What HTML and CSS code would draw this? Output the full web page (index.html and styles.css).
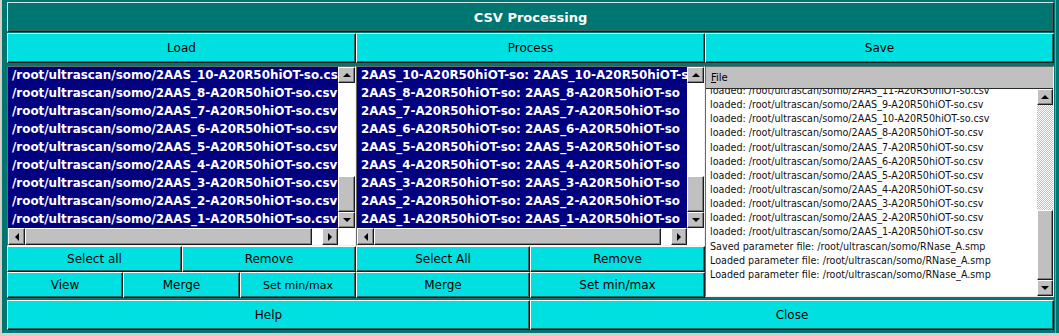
FILE: index.html
```html
<!DOCTYPE html>
<html>
<head>
<meta charset="utf-8">
<link rel="stylesheet" href="styles.css">
</head>
<body>
<div class="window">
  <div class="title">CSV Processing</div>
  <div class="toprow">
    <div class="btn">Load</div>
    <div class="btn">Process</div>
    <div class="btn">Save</div>
  </div>
  <div class="main">
    <div class="col">
      <div class="list">
        <div class="items">
          <div class="item">/root/ultrascan/somo/2AAS_10-A20R50hiOT-so.csv</div>
          <div class="item">/root/ultrascan/somo/2AAS_8-A20R50hiOT-so.csv</div>
          <div class="item">/root/ultrascan/somo/2AAS_7-A20R50hiOT-so.csv</div>
          <div class="item">/root/ultrascan/somo/2AAS_6-A20R50hiOT-so.csv</div>
          <div class="item">/root/ultrascan/somo/2AAS_5-A20R50hiOT-so.csv</div>
          <div class="item">/root/ultrascan/somo/2AAS_4-A20R50hiOT-so.csv</div>
          <div class="item">/root/ultrascan/somo/2AAS_3-A20R50hiOT-so.csv</div>
          <div class="item">/root/ultrascan/somo/2AAS_2-A20R50hiOT-so.csv</div>
          <div class="item">/root/ultrascan/somo/2AAS_1-A20R50hiOT-so.csv</div>
        </div>
        <div class="vscroll">
          <div class="sbtn"><span class="arr up"></span></div>
          <div class="track"></div>
          <div class="slider vs"></div>
          <div class="sbtn"><span class="arr down"></span></div>
        </div>
        <div class="hscroll">
          <div class="sbtn"><span class="arr left"></span></div>
          <div class="slider hs"></div>
          <div class="track"></div>
          <div class="sbtn"><span class="arr right"></span></div>
        </div>
        <div class="corner"></div>
      </div>
      <div class="r1 left">
        <div class="btn">Select all</div>
        <div class="btn">Remove</div>
      </div>
      <div class="r2 left">
        <div class="btn">View</div>
        <div class="btn">Merge</div>
        <div class="btn small">Set min/max</div>
      </div>
    </div>
    <div class="col">
      <div class="list">
        <div class="items">
          <div class="item">2AAS_10-A20R50hiOT-so: 2AAS_10-A20R50hiOT-so</div>
          <div class="item">2AAS_8-A20R50hiOT-so: 2AAS_8-A20R50hiOT-so</div>
          <div class="item">2AAS_7-A20R50hiOT-so: 2AAS_7-A20R50hiOT-so</div>
          <div class="item">2AAS_6-A20R50hiOT-so: 2AAS_6-A20R50hiOT-so</div>
          <div class="item">2AAS_5-A20R50hiOT-so: 2AAS_5-A20R50hiOT-so</div>
          <div class="item">2AAS_4-A20R50hiOT-so: 2AAS_4-A20R50hiOT-so</div>
          <div class="item">2AAS_3-A20R50hiOT-so: 2AAS_3-A20R50hiOT-so</div>
          <div class="item">2AAS_2-A20R50hiOT-so: 2AAS_2-A20R50hiOT-so</div>
          <div class="item">2AAS_1-A20R50hiOT-so: 2AAS_1-A20R50hiOT-so</div>
        </div>
        <div class="vscroll">
          <div class="sbtn"><span class="arr up"></span></div>
          <div class="track"></div>
          <div class="slider vs"></div>
          <div class="sbtn"><span class="arr down"></span></div>
        </div>
        <div class="hscroll">
          <div class="sbtn"><span class="arr left"></span></div>
          <div class="slider hs"></div>
          <div class="track"></div>
          <div class="sbtn"><span class="arr right"></span></div>
        </div>
        <div class="corner"></div>
      </div>
      <div class="r1 mid">
        <div class="btn">Select All</div>
        <div class="btn">Remove</div>
      </div>
      <div class="r2 mid">
        <div class="btn">Merge</div>
        <div class="btn">Set min/max</div>
      </div>
    </div>
    <div class="col">
      <div class="log">
        <div class="menubar"><span class="menu"><u>F</u>ile</span></div>
        <div class="logbody">
          <div class="logtext">
            <div class="lines">
              <div>loaded: /root/ultrascan/somo/2AAS_11-A20R50hiOT-so.csv</div>
              <div>loaded: /root/ultrascan/somo/2AAS_9-A20R50hiOT-so.csv</div>
              <div>loaded: /root/ultrascan/somo/2AAS_10-A20R50hiOT-so.csv</div>
              <div>loaded: /root/ultrascan/somo/2AAS_8-A20R50hiOT-so.csv</div>
              <div>loaded: /root/ultrascan/somo/2AAS_7-A20R50hiOT-so.csv</div>
              <div>loaded: /root/ultrascan/somo/2AAS_6-A20R50hiOT-so.csv</div>
              <div>loaded: /root/ultrascan/somo/2AAS_5-A20R50hiOT-so.csv</div>
              <div>loaded: /root/ultrascan/somo/2AAS_4-A20R50hiOT-so.csv</div>
              <div>loaded: /root/ultrascan/somo/2AAS_3-A20R50hiOT-so.csv</div>
              <div>loaded: /root/ultrascan/somo/2AAS_2-A20R50hiOT-so.csv</div>
              <div>loaded: /root/ultrascan/somo/2AAS_1-A20R50hiOT-so.csv</div>
              <div>Saved parameter file: /root/ultrascan/somo/RNase_A.smp</div>
              <div>Loaded parameter file: /root/ultrascan/somo/RNase_A.smp</div>
              <div>Loaded parameter file: /root/ultrascan/somo/RNase_A.smp</div>
            </div>
          </div>
          <div class="vscroll logscroll">
            <div class="sbtn"><span class="arr up"></span></div>
            <div class="track dither"></div>
            <div class="slider ls"></div>
            <div class="sbtn"><span class="arr down"></span></div>
          </div>
        </div>
      </div>
    </div>
  </div>
  <div class="bottom">
    <div class="btn">Help</div>
    <div class="btn">Close</div>
  </div>
</div>
</body>
</html>
```

FILE: styles.css
```css
* { box-sizing: border-box; }

html, body {
  margin: 0;
  padding: 0;
}

body {
  width: 1059px;
  height: 336px;
  overflow: hidden;
  background: #d4d0c8;
  font-family: "DejaVu Sans", "Liberation Sans", sans-serif;
}

.window {
  margin-left: 2px;
  width: 1057px;
  height: 333px;
  padding: 2px 0 0 5px;
  background:
    linear-gradient(to right, transparent 1053px, #7f9896 1053px, #7f9896 1054px, transparent 1054px),
    #007672;
}

.title {
  width: 1047px;
  height: 30px;
  display: flex;
  align-items: center;
  justify-content: center;
  color: #ffffff;
  font-weight: bold;
  font-size: 13px;
  background: #007672;
  border: 1px solid;
  border-color: #d8e4e2 #202020 #202020 #d8e4e2;
  box-shadow: inset -1px -1px 0 #4c5a58;
}

.btn {
  display: flex;
  align-items: center;
  justify-content: center;
  background: #00e0e0;
  color: #000;
  font-size: 12px;
  border: 1px solid;
  border-color: #ffffff #1c1c1c #1c1c1c #ffffff;
  box-shadow: inset -1px -1px 0 #3a6464;
  white-space: nowrap;
}

.btn.small { font-size: 11px; }

.toprow {
  display: grid;
  grid-template-columns: 349px 349px 349px;
  height: 30px;
  margin-top: 1px;
}

.main {
  display: grid;
  grid-template-columns: 349px 349px 349px;
  margin-top: 3px;
  height: 232px;
}

.col {
  display: flex;
  flex-direction: column;
}

.list {
  height: 180px;
  display: grid;
  grid-template-columns: 1fr 17px;
  grid-template-rows: 1fr 17px;
  border: 1px solid;
  border-color: #6a6a6a #f0f0f0 #f0f0f0 #6a6a6a;
  background: #ffffff;
}

.items {
  background: #000080;
  color: #ffffff;
  font-weight: bold;
  font-size: 11.9px;
  overflow: hidden;
}

.item {
  height: 18px;
  line-height: 17px;
  padding-left: 4px;
  white-space: nowrap;
  overflow: hidden;
}

.vscroll {
  display: flex;
  flex-direction: column;
  background: #ffffff;
}

.vscroll .sbtn { height: 16px; flex: none; }
.vscroll .slider.vs { height: 36px; flex: none; }

.hscroll {
  display: flex;
  background: #ffffff;
}

.hscroll .sbtn { width: 16px; flex: none; }
.hscroll .sbtn:first-child { width: 17px; }
.hscroll .slider.hs { width: 287px; flex: none; }

.track { flex: 1; background: #ffffff; }
.track.dither {
  background: repeating-conic-gradient(#c0c0c0 0 25%, #ffffff 0 50%) 0 0 / 2px 2px;
}

.corner { background: #ffffff; }

.sbtn, .slider {
  background: #c0c0c0;
  border: 1px solid;
  border-color: #ffffff #1c1c1c #1c1c1c #ffffff;
  box-shadow: inset -1px -1px 0 #808080;
}

.sbtn {
  display: flex;
  align-items: center;
  justify-content: center;
}

.arr { width: 0; height: 0; display: block; }
.arr.up { border-left: 4px solid transparent; border-right: 4px solid transparent; border-bottom: 4px solid #000; }
.arr.down { border-left: 4px solid transparent; border-right: 4px solid transparent; border-top: 4px solid #000; }
.arr.left { border-top: 4px solid transparent; border-bottom: 4px solid transparent; border-right: 4px solid #000; }
.arr.right { border-top: 4px solid transparent; border-bottom: 4px solid transparent; border-left: 4px solid #000; }

.r1, .r2 {
  display: grid;
  height: 26px;
}

.r1.left { grid-template-columns: 175px 174px; }
.r1.mid { grid-template-columns: 174px 175px; }
.r2.left { grid-template-columns: 116px 117px 116px; }
.r2.mid { grid-template-columns: 174px 175px; }

.log {
  height: 231px;
  display: flex;
  flex-direction: column;
  border: 1px solid;
  border-color: #6a6a6a #f0f0f0 #f0f0f0 #6a6a6a;
  background: #c0c0c0;
}

.menubar {
  height: 21px;
  flex: none;
  display: flex;
  align-items: center;
  padding-left: 5px;
  font-size: 10px;
  color: #000;
  background: #c0c0c0;
}

.logbody {
  flex: 1;
  display: grid;
  grid-template-columns: 1fr 16px;
  border-top: 1px solid #2a2a2a;
  min-height: 0;
}

.logtext {
  background: #ffffff;
  overflow: hidden;
  font-size: 9.6px;
  color: #111;
}

.lines {
  margin-top: -5px;
  padding-left: 4px;
}

.lines div {
  height: 14.15px;
  line-height: 14.15px;
  white-space: nowrap;
}

.logscroll .slider.ls { height: 70px; flex: none; }

.bottom {
  display: grid;
  grid-template-columns: 523px 524px;
  height: 30px;
  margin-top: 2px;
}
```
